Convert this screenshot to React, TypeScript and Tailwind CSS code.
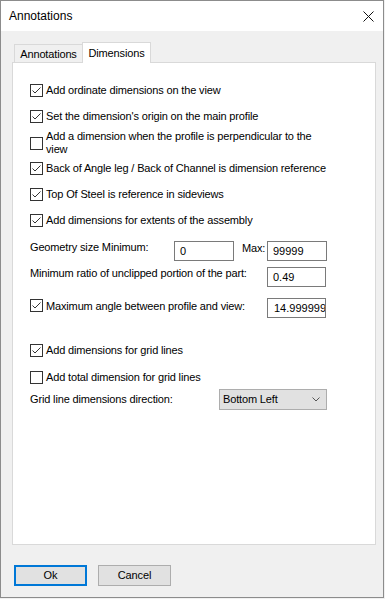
import React from 'react';

function Check({ checked }: { checked: boolean }) {
  return (
    <div className="w-[13px] h-[13px] shrink-0 border border-[#333333] bg-white flex items-center justify-center">
      {checked && (
        <svg width="11" height="11" viewBox="0 0 11 11">
          <path d="M1.5 5.5 L4 8 L9.5 2.5" fill="none" stroke="#333333" strokeWidth="1" />
        </svg>
      )}
    </div>
  );
}

function CheckRow({ checked, children, className = '' }: { checked: boolean; children: React.ReactNode; className?: string }) {
  return (
    <div className={`flex items-center ${className}`}>
      <Check checked={checked} />
      <span className="ml-[3px] leading-[13px] whitespace-nowrap">{children}</span>
    </div>
  );
}

function Field({ value, className = '' }: { value: string; className?: string }) {
  return (
    <div className={`h-[20px] border border-[#7a7a7a] bg-white pl-[5px] flex items-center overflow-hidden whitespace-nowrap tracking-normal ${className}`}>
      {value}
    </div>
  );
}

export default function App() {
  return (
    <div className="w-[385px] h-[599px] bg-[#f0f0f0]">
      <div className="w-[384px] h-[598px] border border-[#8c8c8c] bg-[#f0f0f0] flex flex-col font-['Liberation_Sans',Arial,sans-serif] text-black">
        {/* Title bar */}
        <div className="h-[30px] bg-white flex items-center justify-between pl-[8px] pr-[9px] shrink-0">
          <span className="text-[12px]">Annotations</span>
          <svg width="11" height="11" viewBox="0 0 11 11">
            <path d="M0.5 0.5 L10.5 10.5 M10.5 0.5 L0.5 10.5" stroke="#111" strokeWidth="1" />
          </svg>
        </div>

        {/* Body */}
        <div className="flex-1 flex flex-col pl-[11px] pr-[7px] pt-[11px] text-[11px] tracking-[-0.15px]">
          {/* Tabs */}
          <div className="flex items-end h-[20px] pl-[2px]">
            <div className="w-[68px] h-[18px] border-l border-t border-[#d9d9d9] bg-[#f0f0f0] flex items-center justify-center pt-[2px]">
              Annotations
            </div>
            <div className="relative z-10 w-[69px] h-[21px] -mb-px border-l border-r border-t border-[#d9d9d9] bg-white flex items-center justify-center">
              Dimensions
            </div>
          </div>

          {/* Panel */}
          <div className="h-[483px] border border-[#d9d9d9] bg-white pl-[17px] pt-[21px] flex flex-col">
            <CheckRow checked>Add ordinate dimensions on the view</CheckRow>
            <CheckRow checked className="mt-[13px]">Set the dimension's origin on the main profile</CheckRow>
            <CheckRow checked={false} className="mt-[7px]">
              Add a dimension when the profile is perpendicular to the
              <br />
              view
            </CheckRow>
            <CheckRow checked className="mt-[6px]">Back of Angle leg / Back of Channel is dimension reference</CheckRow>
            <CheckRow checked className="mt-[13px]">Top Of Steel is reference in sideviews</CheckRow>
            <CheckRow checked className="mt-[13px]">Add dimensions for extents of the assembly</CheckRow>

            <div className="mt-[14px] flex items-start h-[20px]">
              <span className="w-[144px] leading-[13px]">Geometry size Minimum:</span>
              <Field value="0" className="w-[60px]" />
              <span className="ml-[8px] w-[25px] leading-[13px] mt-[1px]">Max:</span>
              <Field value="99999" className="w-[60px]" />
            </div>

            <div className="mt-[6px] flex items-start h-[20px]">
              <span className="w-[237px] leading-[13px]">Minimum ratio of unclipped portion of the part:</span>
              <Field value="0.49" className="w-[59px]" />
            </div>

            <div className="mt-[11px] flex items-start h-[20px]">
              <div className="mt-[1px]">
                <Check checked />
              </div>
              <span className="ml-[3px] w-[221px] leading-[13px] mt-[2px] whitespace-nowrap">
                Maximum angle between profile and view:
              </span>
              <Field value="14.999999" className="w-[59px] pl-[6px]" />
            </div>

            <CheckRow checked className="mt-[26px]">Add dimensions for grid lines</CheckRow>
            <CheckRow checked={false} className="mt-[14px]">Add total dimension for grid lines</CheckRow>

            <div className="mt-[5px] flex items-center h-[21px]">
              <span className="w-[189px] leading-[13px]">Grid line dimensions direction:</span>
              <div className="w-[108px] h-[21px] border border-[#adadad] bg-[#e1e1e1] flex items-center justify-between pl-[3px] pr-[6px]">
                <span>Bottom Left</span>
                <svg width="8" height="5" viewBox="0 0 8 5">
                  <path d="M0.5 0.5 L4 4 L7.5 0.5" fill="none" stroke="#555" strokeWidth="1" />
                </svg>
              </div>
            </div>
          </div>

          {/* Buttons */}
          <div className="mt-[20px] flex pl-[2px] gap-[11px]">
            <div className="w-[73px] h-[21px] border-2 border-[#0078d7] bg-[#e1e1e1] flex items-center justify-center">
              Ok
            </div>
            <div className="w-[73px] h-[21px] border border-[#adadad] bg-[#e1e1e1] flex items-center justify-center">
              Cancel
            </div>
          </div>
        </div>
      </div>
    </div>
  );
}
